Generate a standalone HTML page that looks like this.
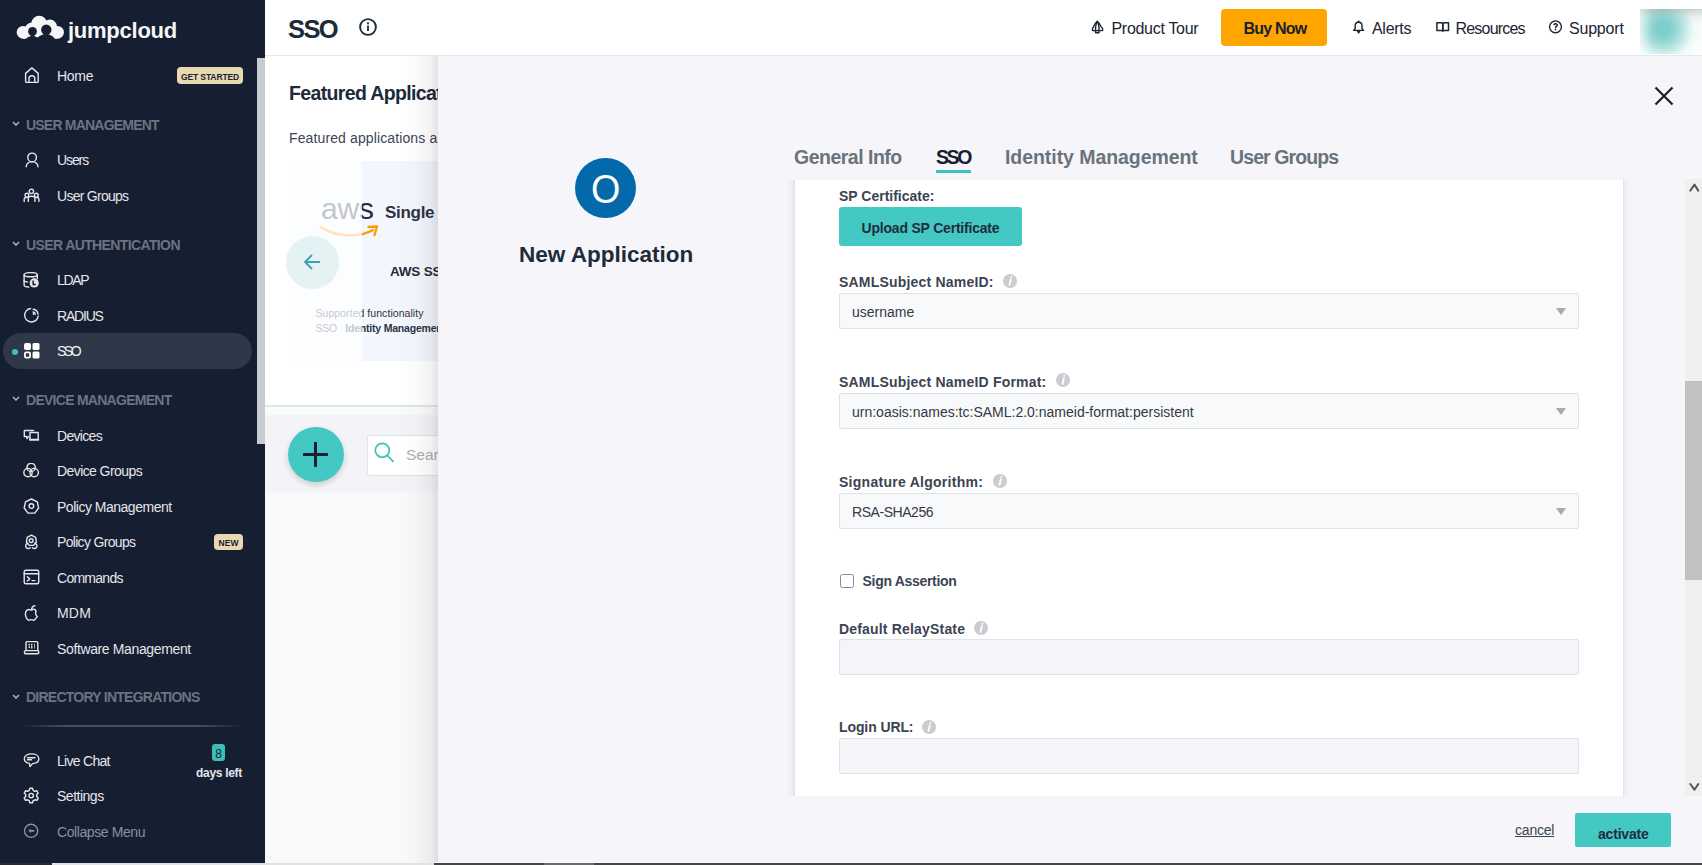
<!DOCTYPE html>
<html><head><meta charset="utf-8">
<style>
*{box-sizing:border-box;margin:0;padding:0}
html,body{width:1702px;height:865px;overflow:hidden;background:#f8f9fb;font-family:"Liberation Sans",sans-serif;position:relative}
.a{position:absolute;white-space:nowrap;line-height:normal}
#side{position:absolute;left:0;top:0;width:265px;height:865px;background:#161e31}
.nav{position:absolute;left:57px;font-size:14px;color:#e4e6ea;letter-spacing:-0.3px}
.hd{position:absolute;left:26px;font-size:14px;font-weight:700;color:#6b7480;letter-spacing:-0.6px}
.chev{position:absolute;left:12px;width:8px;height:5px}
.ic{position:absolute;left:23px;width:17px;height:17px}
#hdr{position:absolute;left:265px;top:0;width:1437px;height:56px;background:#fff;border-bottom:1px solid #e3e8e8}
#main{position:absolute;left:265px;top:56px;width:200px;height:350px;background:#fff}
#ov{position:absolute;left:438px;top:56px;width:1264px;height:809px;background:#f6f6fa}
#shadow{position:absolute;left:398px;top:56px;width:40px;height:809px;background:linear-gradient(to right,rgba(0,0,0,0),rgba(0,0,0,0.015) 45%,rgba(0,0,0,0.05) 80%,rgba(0,0,0,0.11))}
.lbl{position:absolute;left:839px;font-size:14px;font-weight:700;color:#3b4453}
.sel{position:absolute;left:839px;width:740px;height:36px;background:#f8f9fa;border:1.5px solid #dfe3e3;border-radius:2px}
.inp{position:absolute;left:839px;width:740px;height:36px;background:#f5f5f9;border:1.5px solid #dfe3e3;border-radius:2px}
.seltxt{position:absolute;left:12px;top:9px;font-size:14px;color:#333a45;white-space:nowrap}
.tri{position:absolute;left:716px;top:14px;width:0;height:0;border-left:5.5px solid transparent;border-right:5.5px solid transparent;border-top:7px solid #a9a9a9}
.info{position:absolute;width:14px;height:14px;border-radius:50%;background:#c9cbcd;color:#fff;font:italic 700 10px/14px "Liberation Serif",serif;text-align:center}
</style></head><body>

<!-- SIDEBAR -->
<div id="side">
  <!-- logo -->
  <svg class="a" style="left:12px;top:12px" width="56" height="30" viewBox="0 0 56 30">
    <g fill="#f5f6f8">
      <circle cx="11.1" cy="20.3" r="6.4"/>
      <circle cx="20" cy="18" r="7.4"/>
      <circle cx="27.2" cy="11.6" r="7.8"/>
      <circle cx="38" cy="14.6" r="7"/>
      <circle cx="45.5" cy="20.3" r="6.4"/>
      <rect x="11" y="17" width="34.5" height="9.7"/>
    </g>
    <g fill="#161e31">
      <circle cx="20.5" cy="19.4" r="4.4"/>
      <ellipse cx="20.5" cy="29.5" rx="7.3" ry="5.6"/>
      <rect x="18.5" y="21" width="4" height="4"/>
      <circle cx="34.3" cy="17.7" r="5.2"/>
      <ellipse cx="33.8" cy="29" rx="9.5" ry="6.8"/>
      <rect x="31.5" y="20" width="5" height="4"/>
    </g>
  </svg>
  <div class="a" style="left:68px;top:18px;font-size:22px;font-weight:700;color:#f5f6f8;letter-spacing:-0.25px">jumpcloud</div>

  <!-- scrollbar thumb -->
  <div class="a" style="left:257px;top:58px;width:8px;height:386px;background:#c8cbcf"></div>

  <!-- Home -->
  <svg class="ic" style="top:67px" viewBox="0 0 17 17"><g fill="none" stroke="#e4e6ea" stroke-width="1.4" stroke-linecap="round" stroke-linejoin="round"><path d="M2.6 6.4 L8.9 0.9 L15.2 6.4 V14.6 C15.2 15 14.9 15.4 14.5 15.4 H3.3 C2.9 15.4 2.6 15 2.6 14.6 Z"/><path d="M6 15.2 V11.6 A2.9 2.9 0 0 1 11.8 11.6 V15.2"/></g></svg>
  <div class="nav" style="top:68.3px">Home</div>
  <div class="a" style="left:177px;top:67px;width:66px;height:17px;background:#e8d9b3;border-radius:4px;font-size:8.5px;font-weight:700;color:#1a2030;text-align:center;line-height:21.5px;letter-spacing:-0.1px">GET STARTED</div>

  <svg class="chev" style="top:121px" viewBox="0 0 8 5"><path d="M1 1 L4 4 L7 1" fill="none" stroke="#aeb3ba" stroke-width="1.5"/></svg>
  <div class="hd" style="top:117px;letter-spacing:-0.79px">USER MANAGEMENT</div>

  <svg class="ic" style="top:152px" viewBox="0 0 17 17"><g fill="none" stroke="#e4e6ea" stroke-width="1.4" stroke-linecap="round" stroke-linejoin="round"><circle cx="9.1" cy="5.4" r="4.3"/><path d="M3.2 14.7 A5.9 5.1 0 0 1 15 14.7"/></g></svg>
  <div class="nav" style="top:152.3px;letter-spacing:-1.1px">Users</div>

  <svg class="ic" style="top:188px" viewBox="0 0 17 17"><g fill="none" stroke="#e4e6ea" stroke-width="1.4" stroke-linecap="round" stroke-linejoin="round" stroke-width="1.3"><circle cx="8.4" cy="3.3" r="2.2"/><circle cx="3.9" cy="7.2" r="1.9"/><circle cx="13.3" cy="7.2" r="1.9"/><path d="M5.3 13.4 V10.2 C5.3 7.6 11.9 7.6 11.9 10.2 V13.4"/><path d="M1.2 13.4 V11.3 C1.2 9.9 2.2 9.4 3.6 9.6"/><path d="M15.9 13.4 V11.3 C15.9 9.9 14.9 9.4 13.5 9.6"/></g></svg>
  <div class="nav" style="top:188.3px;letter-spacing:-0.73px">User Groups</div>

  <svg class="chev" style="top:241px" viewBox="0 0 8 5"><path d="M1 1 L4 4 L7 1" fill="none" stroke="#aeb3ba" stroke-width="1.5"/></svg>
  <div class="hd" style="top:236.8px;letter-spacing:-0.62px">USER AUTHENTICATION</div>

  <svg class="ic" style="top:272px" viewBox="0 0 17 17"><g fill="none" stroke="#e4e6ea" stroke-width="1.4" stroke-linecap="round" stroke-linejoin="round" stroke-width="1.3"><ellipse cx="7.7" cy="2.7" rx="6.6" ry="2.1"/><path d="M1.1 2.7 V12.9 C1.1 14.1 3 14.8 5.8 15"/><path d="M14.3 2.7 V6.5"/><path d="M1.1 8.4 C1.1 9.3 2.2 9.8 4.5 9.9"/></g><circle cx="11.2" cy="10.9" r="4.6" fill="#e4e6ea"/><path d="M10.2 8.6 V12.4 H12.8" fill="none" stroke="#161e31" stroke-width="1.5"/></svg>
  <div class="nav" style="top:272.3px;letter-spacing:-1.3px">LDAP</div>

  <svg class="ic" style="top:307px" viewBox="0 0 17 17"><g fill="none" stroke="#e4e6ea" stroke-width="1.4" stroke-linecap="round" stroke-linejoin="round" stroke-width="1.5"><path d="M7.6 1.5 A6.8 6.8 0 1 0 15.2 9"/><path d="M10.2 2.2 A5.5 5.5 0 0 1 15 7"/><path d="M10 5 A2.6 2.6 0 0 1 12.3 7.2"/></g><circle cx="10.6" cy="7" r="0.9" fill="#e4e6ea"/></svg>
  <div class="nav" style="top:307.8px;letter-spacing:-1.2px">RADIUS</div>

  <!-- SSO selected -->
  <div class="a" style="left:3px;top:333px;width:249px;height:36px;border-radius:18px;background:#2e3849"></div>
  <div class="a" style="left:12px;top:348.5px;width:6px;height:6px;border-radius:50%;background:#3ec2bd"></div>
  <svg class="a" style="left:24px;top:343px" width="16" height="16" viewBox="0 0 16 16"><g fill="#fff"><rect x="0" y="0" width="7" height="7" rx="2"/><rect x="8.5" y="0" width="7" height="7" rx="1.5"/><rect x="8.5" y="8.5" width="7" height="7" rx="1.5"/></g><rect x="0.9" y="9.4" width="5.2" height="5.2" rx="1.3" fill="none" stroke="#fff" stroke-width="1.8"/></svg>
  <div class="nav" style="top:343.3px;color:#f2f3f5;letter-spacing:-2.5px">SSO</div>

  <svg class="chev" style="top:396px" viewBox="0 0 8 5"><path d="M1 1 L4 4 L7 1" fill="none" stroke="#aeb3ba" stroke-width="1.5"/></svg>
  <div class="hd" style="top:391.8px;letter-spacing:-0.73px">DEVICE MANAGEMENT</div>

  <svg class="ic" style="top:427px" viewBox="0 0 17 17"><g fill="none" stroke="#e4e6ea" stroke-width="1.4" stroke-linecap="round" stroke-linejoin="round" stroke-width="1.3"><path d="M10.5 3.5 H1.3 V9.5 H3.5 L4 11.6 L5.5 9.5"/><path d="M7 12 V5.5 H15.2 V12"/></g><rect x="6" y="11.8" width="10.2" height="1.9" rx="0.6" fill="#e4e6ea"/></svg>
  <div class="nav" style="top:427.8px;letter-spacing:-0.68px">Devices</div>

  <svg class="ic" style="top:463px" viewBox="0 0 17 17"><g fill="none" stroke="#e4e6ea" stroke-width="1.4" stroke-linecap="round" stroke-linejoin="round" stroke-width="1.3"><circle cx="8.1" cy="4.4" r="4.2"/><circle cx="5" cy="9.6" r="4.2"/><circle cx="11.2" cy="9.6" r="4.2"/></g></svg>
  <div class="nav" style="top:463.3px;letter-spacing:-0.58px">Device Groups</div>

  <svg class="ic" style="top:498px" viewBox="0 0 17 17"><g fill="none" stroke="#e4e6ea" stroke-width="1.4" stroke-linecap="round" stroke-linejoin="round"><path d="M8.4 1 L14.3 3.8 L15.6 10 L11.8 15.1 H5 L1.2 10 L2.5 3.8 Z"/><circle cx="8.4" cy="8.1" r="2.3"/></g></svg>
  <div class="nav" style="top:498.8px;letter-spacing:-0.49px">Policy Management</div>

  <svg class="ic" style="top:534px" viewBox="0 0 17 17"><g fill="none" stroke="#e4e6ea" stroke-width="1.4" stroke-linecap="round" stroke-linejoin="round" stroke-width="1.3"><path d="M8.4 1.2 L12.6 3.4 L13.4 8 L10.6 11.4 H6.2 L3.4 8 L4.2 3.4 Z"/><circle cx="8.2" cy="6.6" r="1.9"/><path d="M4.8 9.2 A2.7 2.7 0 1 0 7.2 13.8"/><path d="M11.8 9.2 A2.7 2.7 0 1 1 9.4 13.8"/></g></svg>
  <div class="nav" style="top:534.3px;letter-spacing:-0.68px">Policy Groups</div>
  <div class="a" style="left:214px;top:534px;width:29px;height:16px;background:#e8d9b3;border-radius:4px;font-size:8.5px;font-weight:700;color:#1a2030;text-align:center;line-height:18px">NEW</div>

  <svg class="ic" style="top:569px" viewBox="0 0 17 17"><g fill="none" stroke="#e4e6ea" stroke-width="1.4" stroke-linecap="round" stroke-linejoin="round"><rect x="1.2" y="1.2" width="14.5" height="13.5" rx="1.5"/><path d="M1.2 4.7 H15.7"/><path d="M4.3 7.8 L6.8 9.9 L4.3 12"/><path d="M9.1 11.6 H11.9"/></g></svg>
  <div class="nav" style="top:569.8px;letter-spacing:-0.73px">Commands</div>

  <svg class="ic" style="top:605px" viewBox="0 0 17 17"><g fill="none" stroke="#e4e6ea" stroke-width="1.4" stroke-linecap="round" stroke-linejoin="round" stroke-width="1.3"><path d="M13.2 6 C12.4 4.6 10.6 4 9 4.8 C8.3 5.1 7.9 5.1 7.2 4.8 C5.2 4 2.4 5.3 2.4 8.8 C2.4 11.8 4.2 15.2 5.7 15.2 C6.7 15.2 7.1 14.6 8.1 14.6 C9.1 14.6 9.5 15.2 10.5 15.2 C11.9 15.2 13.4 12.8 14.3 11.5 C12.6 10.6 12 7.5 13.2 6 Z"/><path d="M8.6 4.2 C8.8 2.4 10 1 11.9 0.6"/></g></svg>
  <div class="nav" style="top:605.3px;letter-spacing:0.2px">MDM</div>

  <svg class="ic" style="top:640px" viewBox="0 0 17 17"><g fill="none" stroke="#e4e6ea" stroke-width="1.4" stroke-linecap="round" stroke-linejoin="round"><path d="M3 10.4 V2.6 C3 2 3.4 1.6 4 1.6 H13.8 C14.4 1.6 14.8 2 14.8 2.6 V10.4"/><rect x="1.4" y="10.6" width="14.4" height="3.2" rx="1.4"/></g><g fill="#e4e6ea"><circle cx="6.2" cy="4.6" r="0.9"/><circle cx="8.7" cy="4.6" r="0.9"/><rect x="5.6" y="6.2" width="1.3" height="2" /><rect x="8.1" y="5.8" width="1.3" height="2.8"/><rect x="11" y="3.5" width="0.7" height="5"/></g></svg>
  <div class="nav" style="top:640.8px;letter-spacing:-0.37px">Software Management</div>

  <svg class="chev" style="top:694px" viewBox="0 0 8 5"><path d="M1 1 L4 4 L7 1" fill="none" stroke="#aeb3ba" stroke-width="1.5"/></svg>
  <div class="hd" style="top:689.3px;letter-spacing:-0.75px">DIRECTORY INTEGRATIONS</div>

  <div class="a" style="left:21px;top:725px;width:222px;height:1.5px;background:linear-gradient(to right,rgba(70,80,96,0),#465060 20%,#465060 80%,rgba(70,80,96,0))"></div>

  <svg class="ic" style="top:752px" viewBox="0 0 17 17"><g fill="none" stroke="#e4e6ea" stroke-width="1.4" stroke-linecap="round" stroke-linejoin="round"><path d="M8.6 1.9 C12.8 1.9 15.8 3.9 15.8 6.8 C15.8 9.6 13 11.4 9.6 11.6 L7 14.6 L6.5 11.4 C3.5 10.9 1.3 9.2 1.3 6.8 C1.3 3.9 4.3 1.9 8.6 1.9 Z"/><path d="M4.5 5.8 H12"/><path d="M4.5 7.8 H8.5"/></g></svg>
  <div class="nav" style="top:752.7px;letter-spacing:-0.71px">Live Chat</div>
  <div class="a" style="left:212px;top:744px;width:13px;height:17px;background:#3ebdb8;border-radius:3px;font-size:12px;color:#1a2030;text-align:center;line-height:20px">8</div>
  <div class="a" style="left:196px;top:765.5px;font-size:12px;font-weight:700;color:#e4e6ea;letter-spacing:-0.3px">days left</div>

  <svg class="ic" style="top:787px" viewBox="0 0 17 17"><g fill="none" stroke="#e4e6ea" stroke-width="1.4" stroke-linecap="round" stroke-linejoin="round" stroke-width="1.3"><path d="M6.9 1.3 H9.5 L10.1 3.3 L11.8 4.3 L13.9 3.8 L15.2 6 L13.7 7.5 V9.6 L15.2 11.1 L13.9 13.3 L11.8 12.8 L10.1 13.8 L9.5 15.8 H6.9 L6.3 13.8 L4.6 12.8 L2.5 13.3 L1.2 11.1 L2.7 9.6 V7.5 L1.2 6 L2.5 3.8 L4.6 4.3 L6.3 3.3 Z"/><circle cx="8.2" cy="8.6" r="2.2"/></g></svg>
  <div class="nav" style="top:788.3px;letter-spacing:-0.49px">Settings</div>

  <svg class="ic" style="top:823px" viewBox="0 0 17 17"><circle cx="8.1" cy="7.8" r="6.6" fill="none" stroke="#8a919b" stroke-width="1.4"/><path d="M5.2 7.8 L7.8 5.6 V6.9 H11.3 V8.7 H7.8 V10 Z" fill="#8a919b"/></svg>
  <div class="nav" style="top:823.8px;color:#8a919b;letter-spacing:-0.41px">Collapse Menu</div>
</div>

<!-- HEADER -->
<div id="hdr"></div>
<div class="a" style="left:288px;top:14.5px;font-size:25.5px;font-weight:700;color:#1c2a3a;letter-spacing:-1.6px">SSO</div>
<svg class="a" style="left:359px;top:18px" width="18" height="18" viewBox="0 0 18 18"><circle cx="9" cy="9" r="7.9" fill="none" stroke="#1c2a3a" stroke-width="1.9"/><circle cx="9" cy="5.3" r="1.1" fill="#1c2a3a"/><rect x="8.1" y="7.5" width="1.8" height="5.5" fill="#1c2a3a"/></svg>

<svg class="a" style="left:1086px;top:14px" width="24" height="26" viewBox="0 0 24 26"><g fill="none" stroke="#1b2433" stroke-width="1.4" stroke-linejoin="round"><path d="M11.3 7.2 C9.2 9 8.2 11 7.6 12.6 L6.5 14.6 V16.6 H16.6 V14.6 L15 12.6 C14.4 11 13.4 9 11.3 7.2 Z"/><path d="M9.6 16.4 C9.4 12 10 9.5 11.3 7.6 C12.6 9.5 13.2 12 13 16.4"/><path d="M9.6 16.6 V18.8 H13 V16.6"/></g></svg>
<div class="a" style="left:1111.5px;top:20px;font-size:16px;color:#1b2433;letter-spacing:-0.3px">Product Tour</div>

<div class="a" style="left:1221px;top:9px;width:106px;height:37px;background:#ffa500;border-radius:4px"></div>
<div class="a" style="left:1243.5px;top:20px;font-size:16px;font-weight:700;color:#1a2030;letter-spacing:-0.8px">Buy Now</div>

<svg class="a" style="left:1346px;top:14px" width="24" height="26" viewBox="0 0 24 26"><g fill="none" stroke="#1b2433" stroke-width="1.4" stroke-linejoin="round"><path d="M9.2 14.5 V11.5 C9.2 9.6 10.6 8.3 12.6 8.3 C14.6 8.3 16 9.6 16 11.5 V14.5 L17.6 16.4 H7.6 Z"/><path d="M11.2 16.6 L12.6 18.8 L14 16.6"/></g><circle cx="12.6" cy="7.4" r="1" fill="#1b2433"/></svg>
<div class="a" style="left:1372px;top:20px;font-size:16px;color:#1b2433;letter-spacing:-0.3px">Alerts</div>

<svg class="a" style="left:1430px;top:14px" width="24" height="26" viewBox="0 0 24 26"><g fill="none" stroke="#1b2433" stroke-width="1.5" stroke-linejoin="round"><path d="M6.9 8.8 H11 C12 8.8 12.8 9.3 12.8 10 V17 C12.8 16.6 12 16.5 11 16.5 H6.9 Z"/><path d="M18.5 8.8 H14.6 C13.6 8.8 12.8 9.3 12.8 10 V17 C12.8 16.6 13.6 16.5 14.6 16.5 H18.5 Z"/></g></svg>
<div class="a" style="left:1455.5px;top:20px;font-size:16px;color:#1b2433;letter-spacing:-0.8px">Resources</div>

<svg class="a" style="left:1543px;top:14px" width="24" height="26" viewBox="0 0 24 26"><circle cx="12.5" cy="12.85" r="5.95" fill="none" stroke="#1b2433" stroke-width="1.4"/><path d="M10.9 11.2 C10.9 9.2 14.2 9.2 14.2 11.1 C14.2 12.4 12.5 12.4 12.5 14" fill="none" stroke="#1b2433" stroke-width="1.5"/><circle cx="12.5" cy="15.4" r="0.85" fill="#1b2433"/></svg>
<div class="a" style="left:1569px;top:20px;font-size:16px;color:#1b2433;letter-spacing:-0.2px">Support</div>

<div class="a" style="left:1640px;top:9px;width:62px;height:44.5px;overflow:hidden;background:#fbfdfd">
  <div style="position:absolute;left:0;top:0;width:62px;height:45px;background:radial-gradient(circle at 23px 20px,#7ccfcc 0px,#80d0cd 7px,#9ddbd8 15px,#c9ebea 23px,rgba(235,247,247,0.6) 31px,rgba(255,255,255,0) 40px)"></div>
  <div style="position:absolute;left:0;top:0;width:62px;height:45px;background:linear-gradient(to bottom,rgba(120,135,135,0.35) 0px,rgba(150,160,160,0.12) 8px,rgba(255,255,255,0) 16px)"></div>
  <div style="position:absolute;left:0;top:0;width:12px;height:45px;background:linear-gradient(to right,rgba(255,255,255,0.35),rgba(255,255,255,0))"></div>
</div>

<!-- MAIN behind overlay -->
<div id="main"></div>
<div class="a" style="left:289px;top:82px;font-size:19.5px;font-weight:700;color:#1c2a3a;letter-spacing:-0.65px">Featured Applications</div>
<div class="a" style="left:289px;top:130px;font-size:14px;color:#3a4555;letter-spacing:0.12px">Featured applications are</div>

<div class="a" style="left:289px;top:161px;width:160px;height:200px;background:#f3f6fd"></div>
<div class="a" style="left:321px;top:192px;font-size:30px;color:#252f3e;letter-spacing:-0.2px">aws</div>
<svg class="a" style="left:319px;top:223px" width="62" height="18" viewBox="0 0 62 18"><path d="M2 4 C14 13 38 16 54 7" fill="none" stroke="#ff9900" stroke-width="2.2" stroke-linecap="round"/><path d="M49.5 4 L58 3.5 L55.5 12" fill="none" stroke="#ff9900" stroke-width="2.4" stroke-linecap="round" stroke-linejoin="round"/></svg>
<div class="a" style="left:385px;top:203px;font-size:17px;font-weight:700;color:#2a3444;letter-spacing:-0.3px">Single Sign-On</div>
<div class="a" style="left:390px;top:263.5px;font-size:13.5px;font-weight:700;color:#232d3b;letter-spacing:-0.2px">AWS SSO</div>
<div class="a" style="left:315.5px;top:306.5px;font-size:10.5px;color:#2a3444;letter-spacing:0.05px">Supported functionality</div>
<div class="a" style="left:315.5px;top:321.5px;font-size:10.5px;color:#2a3444;font-weight:700;letter-spacing:-0.2px"><span style="font-weight:400">SSO</span>&nbsp;&nbsp;&nbsp;Identity Management</div>
<div class="a" style="left:289px;top:161px;width:73px;height:200px;background:rgba(255,255,255,0.72)"></div>
<div class="a" style="left:286px;top:236px;width:53px;height:53px;border-radius:50%;background:#e5f2f3"></div>
<svg class="a" style="left:303px;top:253px" width="19" height="18" viewBox="0 0 19 18"><path d="M17 9 H2 M9 2 L2 9 L9 16" fill="none" stroke="#3da3ae" stroke-width="1.8" stroke-linejoin="round"/></svg>

<div class="a" style="left:265px;top:405px;width:180px;height:1.5px;background:#dfe8e8"></div>
<div class="a" style="left:265px;top:406.5px;width:180px;height:8.5px;background:#f9fafb"></div>
<div class="a" style="left:265px;top:415px;width:180px;height:77px;background:#f4f4f8"></div>
<div class="a" style="left:288px;top:427px;width:56px;height:55px;border-radius:50%;background:#43c8c3;box-shadow:0 3px 6px rgba(0,0,0,0.16)"></div>
<svg class="a" style="left:303px;top:442px" width="25" height="25" viewBox="0 0 25 25"><path d="M12.5 1 V24 M1 12.5 H24" stroke="#1a2030" stroke-width="3" stroke-linecap="round"/></svg>
<div class="a" style="left:366.5px;top:434.5px;width:100px;height:41px;background:#fff;border:1px solid #dce6e6;border-radius:2px"></div>
<svg class="a" style="left:374px;top:442px" width="22" height="22" viewBox="0 0 22 22"><circle cx="8.3" cy="8.3" r="7" fill="none" stroke="#3fc3be" stroke-width="1.8"/><path d="M13.5 13.5 L19.5 19.8" stroke="#3fc3be" stroke-width="1.8"/></svg>
<div class="a" style="left:406px;top:445.5px;font-size:15.5px;color:#aab0b8">Search</div>

<!-- OVERLAY -->
<div id="shadow"></div>
<div id="ov"></div>

<svg class="a" style="left:1654px;top:86px" width="20" height="20" viewBox="0 0 20 20"><path d="M1.5 1.5 L18.5 18.5 M18.5 1.5 L1.5 18.5" stroke="#172033" stroke-width="2.2"/></svg>

<div class="a" style="left:574.5px;top:157.5px;width:61px;height:60.5px;border-radius:50%;background:#0469ab"></div>
<div class="a" style="left:591px;top:166px;font-size:41px;color:#fff;transform:scaleX(0.92);transform-origin:left">O</div>
<div class="a" style="left:519px;top:241.8px;font-size:22.5px;font-weight:700;color:#1e2b3a;letter-spacing:0px">New Application</div>

<!-- tabs -->
<div class="a" style="left:794px;top:146px;font-size:19.5px;font-weight:700;color:#6a737d;letter-spacing:-0.5px">General Info</div>
<div class="a" style="left:936px;top:146px;font-size:19.5px;font-weight:700;color:#172033;letter-spacing:-2.4px">SSO</div>
<div class="a" style="left:936px;top:170px;width:35px;height:3px;background:#3ec2bd"></div>
<div class="a" style="left:1005px;top:146px;font-size:19.5px;font-weight:700;color:#6a737d;letter-spacing:-0.06px">Identity Management</div>
<div class="a" style="left:1230px;top:146px;font-size:19.5px;font-weight:700;color:#6a737d;letter-spacing:-0.9px">User Groups</div>

<!-- content panel -->
<div class="a" style="left:785px;top:180px;width:10px;height:616px;background:linear-gradient(to right,rgba(228,230,236,0) 0%,rgba(228,230,236,0.25) 50%,rgba(225,228,234,0.6) 80%,rgba(222,226,232,1) 100%)"></div>
<div class="a" style="left:1623px;top:180px;width:9px;height:616px;background:linear-gradient(to right,#e3e6e8 0px,#e3e6e8 1px,rgba(230,230,238,0.5) 2px,rgba(240,240,246,0) 9px)"></div>
<div class="a" style="left:795px;top:179.5px;width:828px;height:616.5px;background:#fff"></div>

<div class="lbl" style="top:188px">SP Certificate:</div>
<div class="a" style="left:839px;top:207px;width:183px;height:39px;background:#43c8c3;border-radius:3px"></div>
<div class="a" style="left:861.5px;top:220px;font-size:14px;font-weight:700;color:#1f2d3d;letter-spacing:-0.2px">Upload SP Certificate</div>

<div class="lbl" style="top:274px;letter-spacing:0.2px">SAMLSubject NameID:</div>
<svg class="a" style="left:1003.0px;top:274.0px" width="14" height="14" viewBox="0 0 14 14"><circle cx="7" cy="7" r="7" fill="#c9ccd0"/><circle cx="8.4" cy="2.8" r="1" fill="#fff"/><path d="M7.9 5.3 L6.5 10.9" stroke="#fff" stroke-width="1.9" stroke-linecap="round"/></svg>
<div class="sel" style="top:293px"><div class="seltxt" style="top:10px">username</div><div class="tri"></div></div>

<div class="lbl" style="top:373.5px;letter-spacing:0.2px">SAMLSubject NameID Format:</div>
<svg class="a" style="left:1056.0px;top:373.0px" width="14" height="14" viewBox="0 0 14 14"><circle cx="7" cy="7" r="7" fill="#c9ccd0"/><circle cx="8.4" cy="2.8" r="1" fill="#fff"/><path d="M7.9 5.3 L6.5 10.9" stroke="#fff" stroke-width="1.9" stroke-linecap="round"/></svg>
<div class="sel" style="top:393px"><div class="seltxt" style="top:10px;letter-spacing:0px">urn:oasis:names:tc:SAML:2.0:nameid-format:persistent</div><div class="tri"></div></div>

<div class="lbl" style="top:474px;letter-spacing:0.27px">Signature Algorithm:</div>
<svg class="a" style="left:993.0px;top:474.0px" width="14" height="14" viewBox="0 0 14 14"><circle cx="7" cy="7" r="7" fill="#c9ccd0"/><circle cx="8.4" cy="2.8" r="1" fill="#fff"/><path d="M7.9 5.3 L6.5 10.9" stroke="#fff" stroke-width="1.9" stroke-linecap="round"/></svg>
<div class="sel" style="top:493px"><div class="seltxt" style="top:10px;letter-spacing:-0.45px">RSA-SHA256</div><div class="tri"></div></div>

<div class="a" style="left:839.5px;top:573.7px;width:14px;height:14px;border:1.7px solid #8a8a96;border-radius:2.5px;background:#fff"></div>
<div class="a" style="left:862.5px;top:572.5px;font-size:14px;font-weight:700;color:#3b4453;letter-spacing:-0.3px">Sign Assertion</div>

<div class="lbl" style="top:620.5px;letter-spacing:0.18px">Default RelayState</div>
<svg class="a" style="left:974.0px;top:621.0px" width="14" height="14" viewBox="0 0 14 14"><circle cx="7" cy="7" r="7" fill="#c9ccd0"/><circle cx="8.4" cy="2.8" r="1" fill="#fff"/><path d="M7.9 5.3 L6.5 10.9" stroke="#fff" stroke-width="1.9" stroke-linecap="round"/></svg>
<div class="inp" style="top:639px"></div>

<div class="lbl" style="top:719px;letter-spacing:-0.1px">Login URL:</div>
<svg class="a" style="left:922.0px;top:720.0px" width="14" height="14" viewBox="0 0 14 14"><circle cx="7" cy="7" r="7" fill="#c9ccd0"/><circle cx="8.4" cy="2.8" r="1" fill="#fff"/><path d="M7.9 5.3 L6.5 10.9" stroke="#fff" stroke-width="1.9" stroke-linecap="round"/></svg>
<div class="inp" style="top:738px"></div>

<!-- scrollbar -->
<div class="a" style="left:1685px;top:179px;width:17px;height:617px;background:#f0f0f0"></div>
<div class="a" style="left:1685px;top:381px;width:17px;height:199px;background:#c1c1c1"></div>
<svg class="a" style="left:1688px;top:180px" width="13" height="14" viewBox="0 0 13 14"><path d="M2.3 10.6 L6.45 4.6 L10.3 10.6" fill="none" stroke="#555" stroke-width="2" stroke-linecap="round" stroke-linejoin="round"/></svg>
<svg class="a" style="left:1688px;top:780px" width="13" height="14" viewBox="0 0 13 14"><path d="M2.3 4 L6.45 9.7 L10.3 4" fill="none" stroke="#555" stroke-width="2" stroke-linecap="round" stroke-linejoin="round"/></svg>

<!-- footer -->
<div class="a" style="left:1515px;top:822px;font-size:14px;color:#3b4453;text-decoration:underline;letter-spacing:-0.2px">cancel</div>
<div class="a" style="left:1575px;top:813px;width:96px;height:34px;background:#43c8c3;border-radius:2px"></div>
<div class="a" style="left:1598px;top:825.5px;font-size:14px;font-weight:700;color:#1f2d3d;letter-spacing:-0.2px">activate</div>

<!-- bottom strip -->
<div class="a" style="left:0;top:863px;width:52px;height:2px;background:#2a2b30"></div>
<div class="a" style="left:52px;top:863px;width:382px;height:2px;background:#e2e2e4"></div>
<div class="a" style="left:434px;top:862px;width:1268px;height:1px;background:#fdfdfe"></div>
<div class="a" style="left:434px;top:863px;width:1268px;height:2px;background:#464648"></div>
<div class="a" style="left:544px;top:863px;width:50px;height:2px;background:#6c6c6e"></div>
</body></html>
